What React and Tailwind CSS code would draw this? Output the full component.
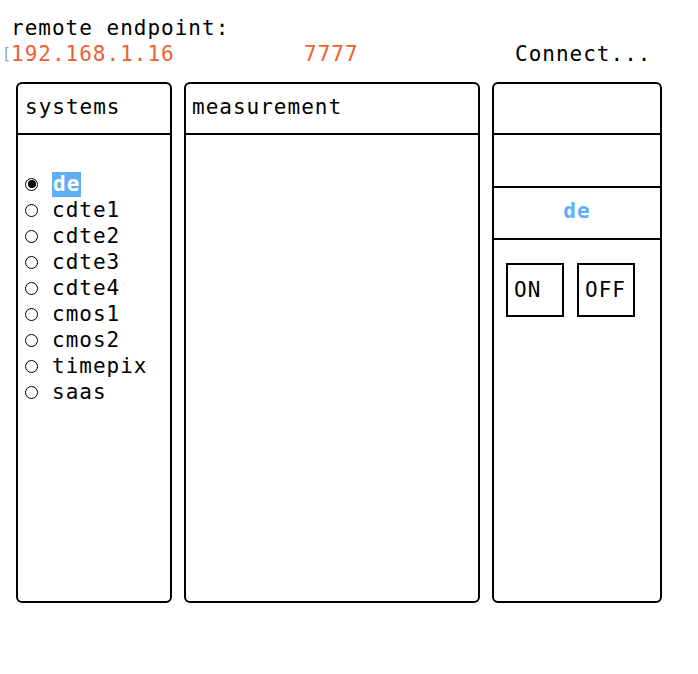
import React from 'react';

const SYSTEMS = ['de', 'cdte1', 'cdte2', 'cdte3', 'cdte4', 'cmos1', 'cmos2', 'timepix', 'saas'];

const mono = { fontFamily: '"DejaVu Sans Mono", "Liberation Mono", monospace' };

function Radio({ checked }) {
    return (
        <span className="w-[13px] h-[13px] rounded-full border-[1.5px] border-black flex items-center justify-center shrink-0">
            {checked && <span className="w-[8px] h-[8px] rounded-full bg-black" />}
        </span>
    );
}

export default function App() {
    return (
        <div className="w-[698px] h-[674px] bg-white text-black text-[21px] leading-[26px] tracking-[1px]" style={mono}>
            {/* endpoint */}
            <div className="pt-[15px]">
                <div className="pl-[11px]">remote endpoint:</div>
                <div className="flex pl-[2px]">
                    <span className="w-[9px] text-[15px] text-gray-400 font-light tracking-normal">[</span>
                    <span className="w-[293px] text-[#ef5f33]">192.168.1.16</span>
                    <span className="w-[211px] text-[#ef5f33]">7777</span>
                    <span>Connect...</span>
                </div>
            </div>

            {/* panels */}
            <div className="flex gap-[12px] pl-[16px] mt-[15px]">
                <div className="w-[156px] h-[521px] border-2 border-black rounded-[6px] flex flex-col">
                    <div className="h-[51px] border-b-2 border-black px-[7px] pb-[4px] flex items-center">systems</div>
                    <div className="pt-[36px] pl-[7px] flex flex-col">
                        {SYSTEMS.map((s, i) => (
                            <div key={s} className="h-[26px] flex items-center gap-[14px]">
                                <Radio checked={i === 0} />
                                {i === 0 ? (
                                    <span className="bg-[#5eaff8] text-white font-bold px-[1px] leading-[25px]">{s}</span>
                                ) : (
                                    <span>{s}</span>
                                )}
                            </div>
                        ))}
                    </div>
                </div>

                <div className="w-[296px] h-[521px] border-2 border-black rounded-[6px] flex flex-col">
                    <div className="h-[51px] border-b-2 border-black px-[6px] pb-[4px] flex items-center">measurement</div>
                </div>

                <div className="w-[170px] h-[521px] border-2 border-black rounded-[6px] flex flex-col">
                    <div className="h-[51px] border-b-2 border-black" />
                    <div className="h-[53px] border-b-2 border-black" />
                    <div className="h-[52px] border-b-2 border-black pb-[4px] flex items-center justify-center text-[#5eaff8] font-bold">de</div>
                    <div className="flex gap-[13px] pl-[12px] pt-[23px]">
                        <div className="w-[58px] h-[54px] border-2 border-black flex items-center pl-[6px]">ON</div>
                        <div className="w-[58px] h-[54px] border-2 border-black flex items-center pl-[6px]">OFF</div>
                    </div>
                </div>
            </div>
        </div>
    );
}
